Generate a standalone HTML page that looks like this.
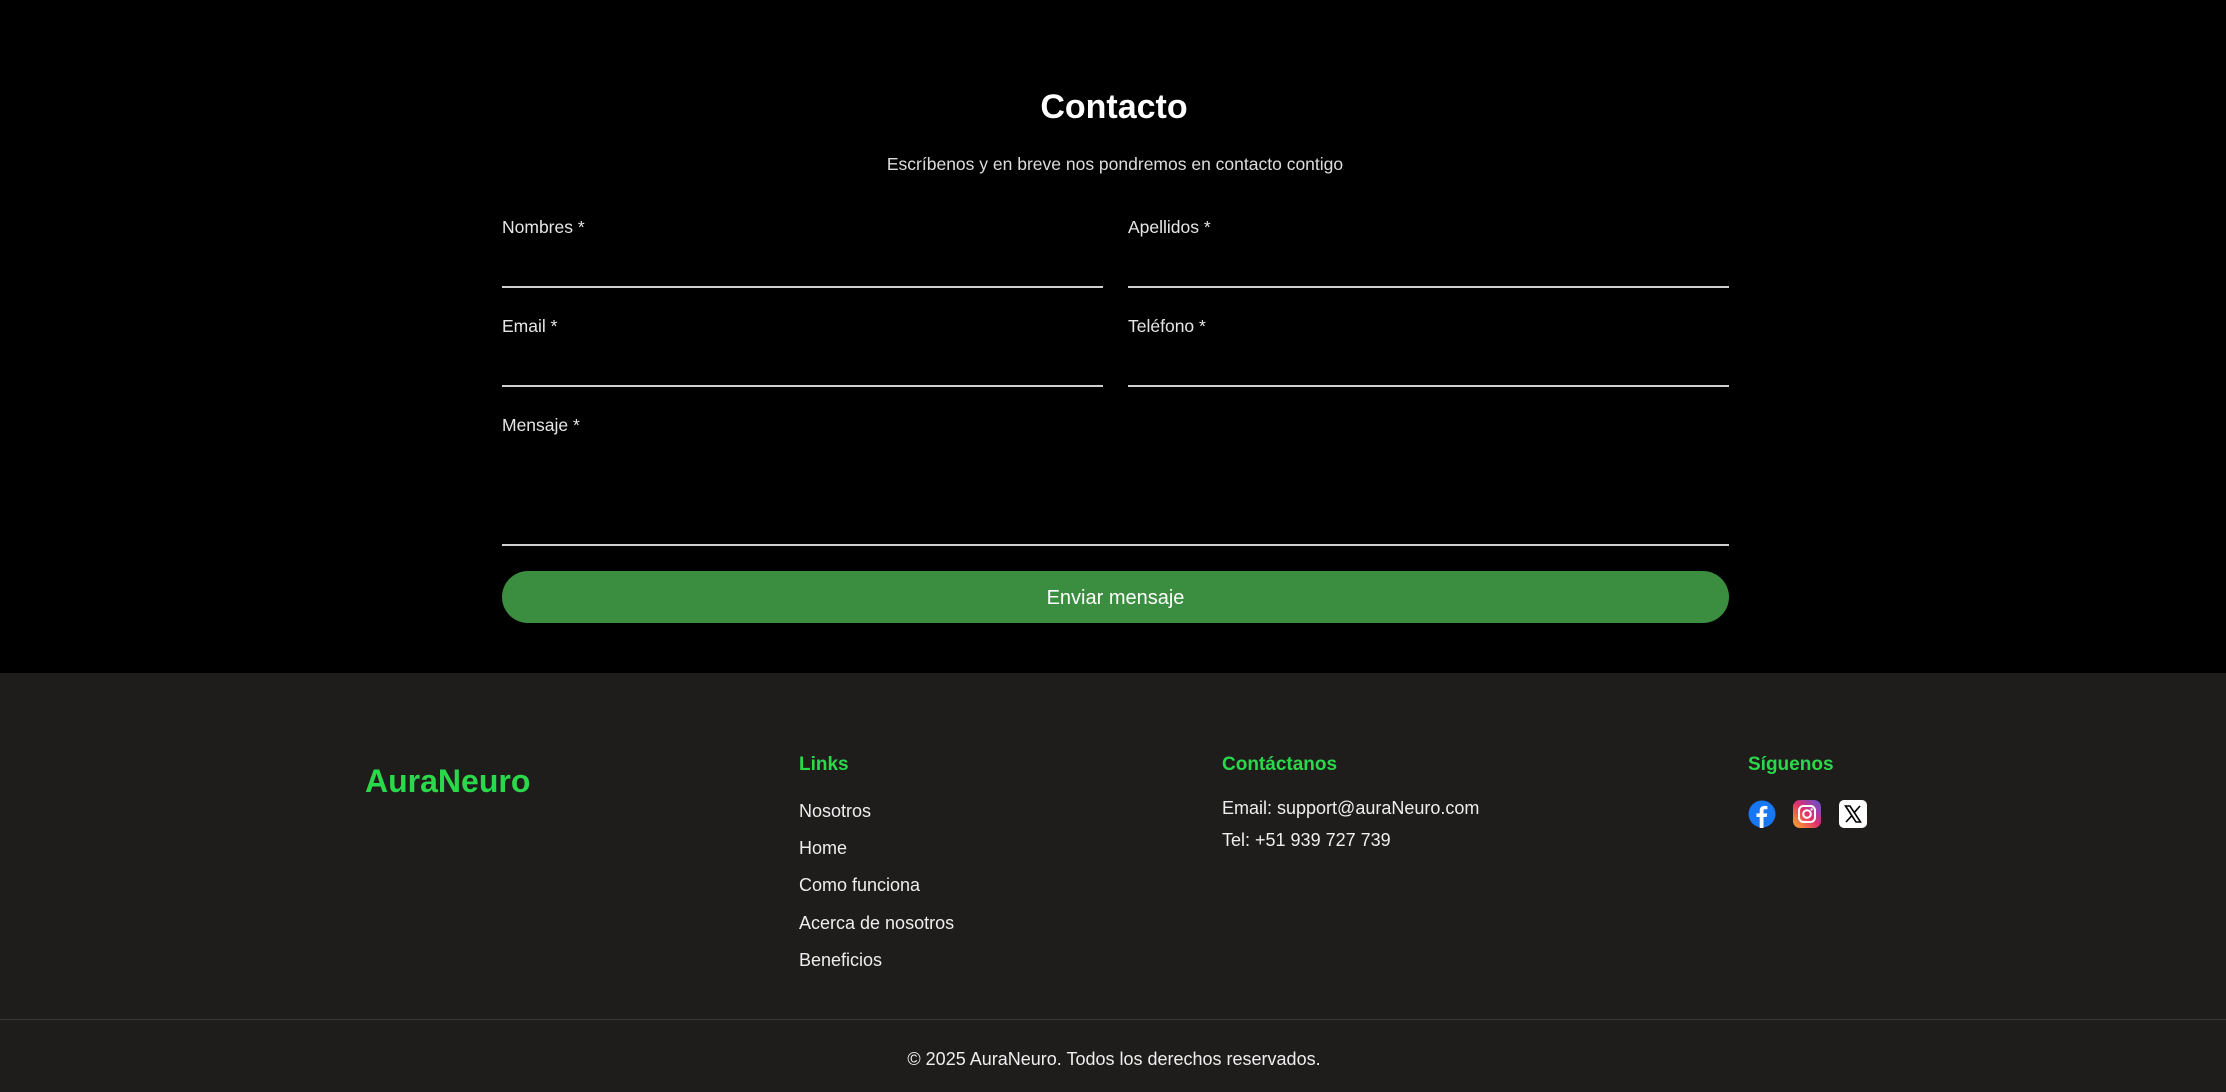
<!DOCTYPE html>
<html><head><meta charset="utf-8"><style>
*{margin:0;padding:0;box-sizing:border-box}
body{width:2226px;height:1092px;background:#000;font-family:"Liberation Sans",sans-serif;color:#fff;position:relative;overflow:hidden}
.a{position:absolute;white-space:nowrap}
.lbl{font-size:17.5px;color:#e6e6e6;line-height:20px}
.ul{position:absolute;height:1.5px;background:#cfcfcf}
.foot{position:absolute;left:0;top:673px;width:2226px;height:419px;background:#1f1c1c}
.g{color:#2ad94a;font-weight:bold}
.lk{font-size:18px;color:#eee;line-height:20px}
</style></head><body>
<div class="a" style="left:0;width:2228px;text-align:center;top:87px;font-size:34px;font-weight:bold;line-height:40px">Contacto</div>
<div class="a" style="left:0;width:2230px;text-align:center;top:154px;font-size:17.5px;color:#ddd;line-height:20px">Escríbenos y en breve nos pondremos en contacto contigo</div>
<div class="a lbl" style="left:502px;top:217px">Nombres *</div>
<div class="a lbl" style="left:1128px;top:217px">Apellidos *</div>
<div class="ul" style="left:502px;width:601px;top:286px"></div>
<div class="ul" style="left:1128px;width:601px;top:286px"></div>
<div class="a lbl" style="left:502px;top:316px">Email *</div>
<div class="a lbl" style="left:1128px;top:316px">Teléfono *</div>
<div class="ul" style="left:502px;width:601px;top:385px"></div>
<div class="ul" style="left:1128px;width:601px;top:385px"></div>
<div class="a lbl" style="left:502px;top:415px">Mensaje *</div>
<div class="ul" style="left:502px;width:1227px;top:544px"></div>
<div class="a" style="left:502px;top:571px;width:1227px;height:52px;border-radius:26px;background:#3b8d40;text-align:center;line-height:54px;font-size:20px">Enviar mensaje</div>
<div class="foot"></div>
<div class="a g" style="left:365px;top:763px;font-size:32px;line-height:36px">AuraNeuro</div>
<div class="a g" style="left:799px;top:754px;font-size:19px;line-height:22px">Links</div>
<div class="a lk" style="left:799px;top:801px">Nosotros</div>
<div class="a lk" style="left:799px;top:838px">Home</div>
<div class="a lk" style="left:799px;top:875px">Como funciona</div>
<div class="a lk" style="left:799px;top:913px">Acerca de nosotros</div>
<div class="a lk" style="left:799px;top:950px">Beneficios</div>
<div class="a g" style="left:1222px;top:754px;font-size:19px;line-height:22px">Contáctanos</div>
<div class="a lk" style="left:1222px;top:798px">Email: support@auraNeuro.com</div>
<div class="a lk" style="left:1222px;top:830px">Tel: +51 939 727 739</div>
<div class="a g" style="left:1748px;top:754px;font-size:19px;line-height:22px">Síguenos</div>
<svg class="a" style="left:1748px;top:800px" width="28" height="28" viewBox="0 0 28 28"><circle cx="14" cy="14" r="13.5" fill="#1877f2"/><path d="M15.5 28V17h3.2l.5-3.6h-3.7v-2.3c0-1 .3-1.8 1.9-1.8h2V6.1c-.4 0-1.6-.2-2.9-.2-2.9 0-4.8 1.7-4.8 4.9v2.6H8.5V17h3.2v11z" fill="#fff"/></svg>
<svg class="a" style="left:1793px;top:800px" width="28" height="28" viewBox="0 0 28 28"><defs><linearGradient id="ig" x1="0" y1="1" x2="1" y2="0"><stop offset="0" stop-color="#fdb022"/><stop offset=".5" stop-color="#e1306c"/><stop offset="1" stop-color="#5b51d8"/></linearGradient></defs><rect width="28" height="28" rx="7" fill="url(#ig)"/><rect x="6" y="6" width="16" height="16" rx="4.5" fill="none" stroke="#fff" stroke-width="2"/><circle cx="14" cy="14" r="3.8" fill="none" stroke="#fff" stroke-width="2"/><circle cx="18.6" cy="9.4" r="1.1" fill="#fff"/></svg>
<svg class="a" style="left:1839px;top:800px" width="28" height="28" viewBox="0 0 28 28"><rect width="28" height="28" rx="5" fill="#fff"/><path d="M6.5 6h4.5l10.5 16h-4.5z" fill="none" stroke="#000" stroke-width="1.6"/><path d="M21 6l-6 6.8M13 15.5 7 22" stroke="#000" stroke-width="1.6"/></svg>
<div class="a" style="left:0;top:1019px;width:2226px;height:1px;background:#3a3636"></div>
<div class="a" style="left:0;width:2228px;text-align:center;top:1048px;font-size:18px;color:#eee;line-height:22px">© 2025 AuraNeuro. Todos los derechos reservados.</div>
</body></html>
